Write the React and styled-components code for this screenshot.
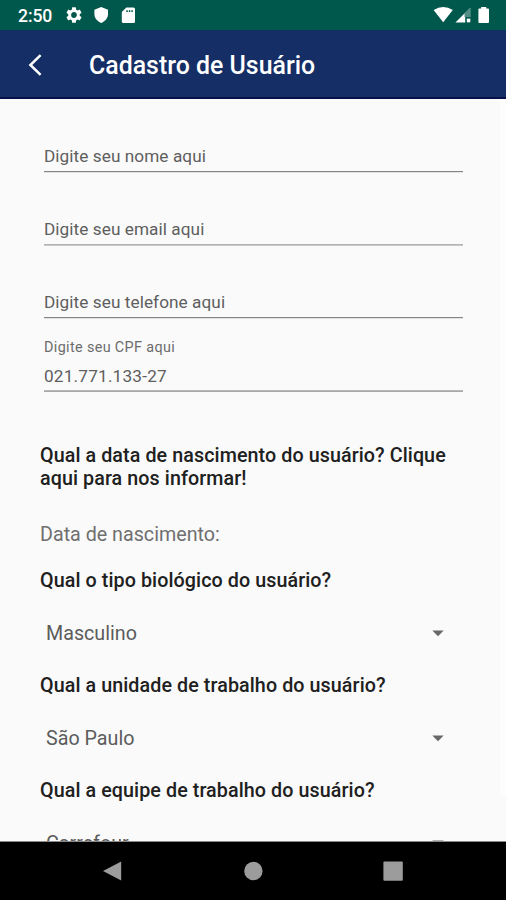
import React from "react";
import styled, { createGlobalStyle } from "styled-components";

const GlobalStyle = createGlobalStyle`
  * { box-sizing: border-box; }
  html, body { margin: 0; padding: 0; overflow: hidden; }
  body { font-family: Roboto, "Liberation Sans", sans-serif; }
`;

const Screen = styled.div`
  width: 506px;
  height: 900px;
  display: flex;
  flex-direction: column;
  background: #fafafa;
  overflow: hidden;
`;

const StatusBar = styled.header`
  height: 30px;
  flex: none;
  display: flex;
  align-items: center;
  justify-content: space-between;
  padding: 0 15px 0 17px;
  background: #00574b;
  color: #fff;
`;

const StatusGroup = styled.div`
  display: flex;
  align-items: center;
  height: 30px;
`;

const Clock = styled.span`
  width: 49px;
  padding: 2px 0 0 1px;
  font-size: 17.6px;
  line-height: 20px;
  font-weight: 500;
  letter-spacing: -0.1px;
`;

const Glyph = styled.svg`
  display: block;
  flex: none;
  fill: #fff;
`;

const AppBar = styled.div`
  height: 69px;
  flex: none;
  display: flex;
  align-items: center;
  padding: 0 28px;
  background: #152e66;
  border-bottom: 2px solid #07104b;
`;

const BackButton = styled.button`
  width: 61px;
  height: 48px;
  padding: 3px 0 0;
  border: 0;
  background: none;
  display: flex;
  align-items: center;
`;

const Title = styled.h1`
  margin: 0;
  padding-top: 4px;
  color: #fff;
  font-size: 24.9px;
  line-height: 30px;
  font-weight: 500;
  white-space: nowrap;
`;

const Viewport = styled.main`
  flex: 1;
  min-height: 0;
  display: flex;
  overflow: hidden;
  border-bottom: 1px solid #8a8a8a;
`;

const Form = styled.form`
  width: 500px;
  flex: none;
  padding: 0 37px 0 40px;
`;

const ScrollTrack = styled.div`
  width: 6px;
  height: 698px;
  background: #fdfdfd;
`;

const Field = styled.div`
  height: 73px;
  margin: 0 0 0 4px;
  width: 419px;
  display: flex;
  flex-direction: column;
  justify-content: flex-end;
  border-bottom: 1px solid ${(p) => p.$line || "#858585"};
  box-shadow: 0 1px 0 ${(p) => p.$soft || "#e2e2e2"};
`;

const FieldLabel = styled.label`
  color: #6c6c6c;
  font-size: 14.4px;
  line-height: 18px;
  letter-spacing: 0.35px;
  margin-bottom: 9px;
`;

const FieldText = styled.span`
  color: #5e5e5e;
  font-size: 17.2px;
  line-height: 20px;
  letter-spacing: ${(p) => p.$spacing || 0.07}px;
  margin-bottom: ${(p) => p.$bottom || 5}px;
  white-space: nowrap;
`;

const Question = styled.h2`
  margin: ${(p) => p.$top || 0}px 0 0;
  color: #202020;
  font-size: 19.7px;
  line-height: 23px;
  font-weight: 500;
  letter-spacing: 0.09px;
  white-space: nowrap;
`;

const BirthDate = styled.p`
  margin: 33px 0 0;
  color: #6f6f6f;
  font-size: 19.7px;
  line-height: 23px;
`;

const Select = styled.div`
  height: 61px;
  margin: 11px 0 10px;
  padding: 0 19px 0 6px;
  display: flex;
  align-items: center;
  justify-content: space-between;
  color: #5c5c5c;
  font-size: 19.7px;
  line-height: 23px;
`;

const NavBar = styled.nav`
  height: 58px;
  flex: none;
  display: flex;
  align-items: center;
  justify-content: center;
  gap: 120px;
  background: #000;
`;

const NavIcon = styled.svg`
  width: 20px;
  height: 22px;
  display: block;
  fill: #9c9c9c;
`;

const Dropdown = ({ children }) => (
  <Select>
    <span>{children}</span>
    <svg width="12" height="7" viewBox="0 0 12 7">
      <path d="M0.3 0.5H11.7L6 6.3Z" fill="#686868" />
    </svg>
  </Select>
);

export default function App() {
  return (
    <>
      <GlobalStyle />
      <Screen>
        <StatusBar>
          <StatusGroup>
            <Clock>2:50</Clock>
            <Glyph width="16" height="18" viewBox="2 2 20 20">
              <path d="M19.14 12.94c.04-.3.06-.61.06-.94 0-.32-.02-.64-.07-.94l2.03-1.58a.49.49 0 0 0 .12-.61l-1.92-3.32a.488.488 0 0 0-.59-.22l-2.39.96c-.5-.38-1.03-.7-1.62-.94l-.36-2.54a.484.484 0 0 0-.48-.41h-3.84c-.24 0-.43.17-.47.41l-.36 2.54c-.59.24-1.13.57-1.62.94l-2.39-.96c-.22-.08-.47 0-.59.22L2.74 8.87c-.12.21-.08.47.12.61l2.03 1.58c-.05.3-.09.63-.09.94s.02.64.07.94l-2.03 1.58a.49.49 0 0 0-.12.61l1.92 3.32c.12.22.37.29.59.22l2.39-.96c.5.38 1.03.7 1.62.94l.36 2.54c.05.24.24.41.48.41h3.84c.24 0 .44-.17.47-.41l.36-2.54c.59-.24 1.13-.56 1.62-.94l2.39.96c.22.08.47 0 .59-.22l1.92-3.32c.12-.22.07-.47-.12-.61l-2.01-1.58zM12 15.6A3.61 3.61 0 0 1 8.4 12c0-1.98 1.62-3.6 3.6-3.6s3.6 1.62 3.6 3.6-1.62 3.6-3.6 3.6z" />
            </Glyph>
            <Glyph width="39" height="18" viewBox="0 0 39 18">
              <path d="M19.2 1 26 3.8V8c0 4-2.4 7-6.8 9-4.4-2-6.8-5-6.8-9V3.8Z" />
            </Glyph>
            <Glyph width="15" height="18" viewBox="0 0 15 18">
              <path fillRule="evenodd" d="M5.4 1.5H12.5Q14 1.5 14 3V15.5Q14 17 12.5 17H2.3Q.8 17 .8 15.5V6.1ZM5.3 4.2V6H6.8V4.2ZM7.8 4.2V6H9.3V4.2ZM10.3 4.2V6H11.8V4.2Z" />
            </Glyph>
          </StatusGroup>
          <StatusGroup>
            <Glyph width="58" height="20" viewBox="0 0 58 20">
              <path d="M.6 5Q10.2-1 19.8 5L10.2 17.3Z" />
              <path d="M22.4 17.6 37.3 2.8V12H32.2V17.6Z" />
              <path d="M31.5 8.6 37.3 2.8V12H31.5Z" fill="#00574b" opacity=".68" />
              <path d="M33.8 13.6H37.3V17.3H33.8Z" />
              <path d="M48.2 2H53.2V3.6H55Q56 3.6 56 4.6V17Q56 18 55 18H46.4Q45.4 18 45.4 17V4.6Q45.4 3.6 46.4 3.6H48.2Z" />
            </Glyph>
          </StatusGroup>
        </StatusBar>
        <AppBar>
          <BackButton type="button" aria-label="Voltar">
            <svg width="14" height="22" viewBox="0 0 14 22">
              <path d="M12.6 1.2 2.4 11 12.6 20.8" fill="none" stroke="#fff" strokeWidth="2.5" />
            </svg>
          </BackButton>
          <Title>Cadastro de Usuário</Title>
        </AppBar>
        <Viewport>
          <Form>
            <Field>
              <FieldText>Digite seu nome aqui</FieldText>
            </Field>
            <Field $line="#b4b4b4" $soft="#c8c8c8">
              <FieldText>Digite seu email aqui</FieldText>
            </Field>
            <Field>
              <FieldText>Digite seu telefone aqui</FieldText>
            </Field>
            <Field $line="#b8b8b8" $soft="#a8a8a8">
              <FieldLabel>Digite seu CPF aqui</FieldLabel>
              <FieldText $bottom={4} $spacing={0.2}>021.771.133-27</FieldText>
            </Field>
            <Question $top={53}>
              Qual a data de nascimento do usuário? Clique
              <br />
              aqui para nos informar!
            </Question>
            <BirthDate>Data de nascimento:</BirthDate>
            <Question $top={23}>Qual o tipo biológico do usuário?</Question>
            <Dropdown>Masculino</Dropdown>
            <Question>Qual a unidade de trabalho do usuário?</Question>
            <Dropdown>São Paulo</Dropdown>
            <Question>Qual a equipe de trabalho do usuário?</Question>
            <Dropdown>Carrefour</Dropdown>
          </Form>
          <ScrollTrack />
        </Viewport>
        <NavBar>
          <NavIcon viewBox="0 0 20 22">
            <path d="M18.2 1.4V20.6L0 11Z" />
          </NavIcon>
          <NavIcon viewBox="0 0 20 22">
            <circle cx="10.4" cy="11" r="9.2" />
          </NavIcon>
          <NavIcon viewBox="0 0 20 22">
            <rect x=".4" y="1.5" width="19.4" height="19.2" rx="1" />
          </NavIcon>
        </NavBar>
      </Screen>
    </>
  );
}
